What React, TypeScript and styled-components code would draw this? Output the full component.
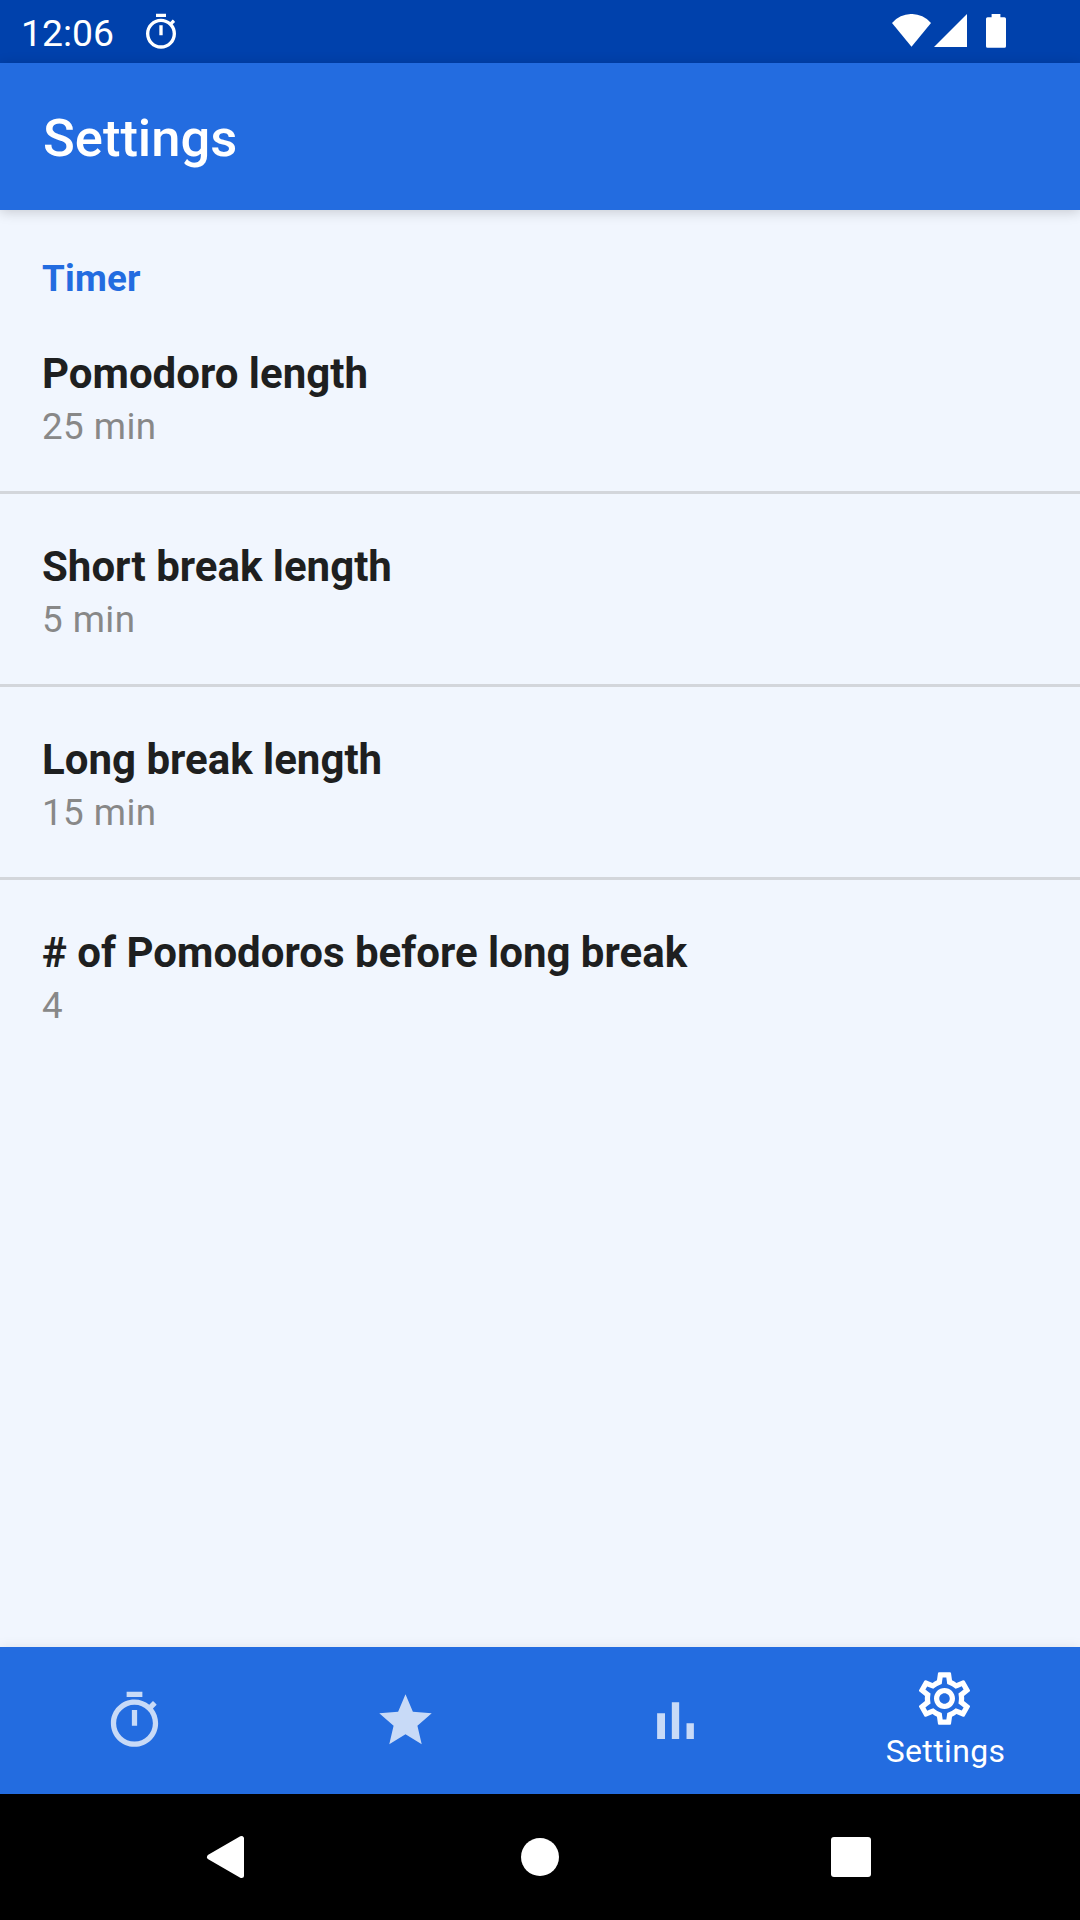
import React from 'react';
import styled, { createGlobalStyle } from 'styled-components';

const Global = createGlobalStyle`
  body { margin: 0; font-family: Roboto, "Noto Sans", sans-serif; }
  * { box-sizing: border-box; }
`;
const Screen = styled.div`
  width: 1080px; height: 1920px; display: flex; flex-direction: column;
  background: #f1f6fe; overflow: hidden;
`;
const StatusBar = styled.header`
  height: 63px; flex: none; background: #0041ac; color: #fff;
  display: flex; align-items: center; padding: 0 72px 0 21px;
`;
const Clock = styled.span`
  font-size: 37.3px; line-height: 44px; margin: 3px 28px 0 0; width: 92px; white-space: nowrap;
`;
const StatusIcons = styled.div`
  margin: 1px 0 0 auto; display: flex; align-items: center;
`;
const AppBar = styled.div`
  height: 147px; flex: none; background: #236ce0; color: #fff;
  display: flex; align-items: center; padding: 2px 43px 0;
  box-shadow: 0 2px 12px rgba(0, 0, 0, 0.18);
`;
const Title = styled.h1`
  margin: 0; font-size: 52.5px; line-height: 62px; font-weight: 500;
`;
const Content = styled.main`
  flex: 1; padding-top: 47px;
`;
const Section = styled.h2`
  margin: 0; padding-left: 42px; font-size: 36.75px; line-height: 44px; font-weight: 700;
  letter-spacing: 0.2px; color: #236ce0;
`;
const Preference = styled.div<{ $last?: boolean }>`
  height: 193px; padding: 48px 42px 0;
  border-bottom: ${(p) => (p.$last ? 'none' : '3px solid #d3d6db')};
`;
const Name = styled.div`
  font-size: 42px; line-height: 50px; font-weight: 700; color: #1e1f20;
`;
const Value = styled.div`
  margin-top: 6px; font-size: 36.75px; line-height: 44px; letter-spacing: 0.45px; color: #888;
`;
const Tabs = styled.nav`
  height: 147px; flex: none; background: #236ce0; display: grid; grid-template-columns: repeat(4, 1fr);
  box-shadow: 0 0 12px rgba(0, 0, 0, 0.08);
`;
const Tab = styled.div<{ $active?: boolean; $inset?: number }>`
  display: flex; flex-direction: column; align-items: center; justify-content: center;
  padding-right: ${(p) => p.$inset ?? 0}px;
  padding-bottom: ${(p) => (p.$active ? 4 : 0)}px;
  color: ${(p) => (p.$active ? '#fff' : '#c8daf7')};
`;
const TabLabel = styled.span`
  margin-top: 3px; padding-left: 2px; font-size: 31.9px; line-height: 37px; letter-spacing: 0.4px;
`;
const SystemNav = styled.footer`
  height: 126px; flex: none; background: #000; color: #fff; display: flex; justify-content: space-between;
  align-items: center; padding: 0 208px 0 206px;
`;
const Glyph = styled.svg`
  display: block; fill: currentColor; flex: none;
`;
const HomeGlyph = styled(Glyph)`
  margin-left: 6px;
`;

const TIMER = 'M15 1H9v2h6V1zm-4 13h2V8h-2v6zm8.03-6.61 1.42-1.42c-.43-.51-.9-.99-1.41-1.41l-1.42 1.42C16.07 4.74 14.12 4 12 4c-4.97 0-9 4.03-9 9s4.02 9 9 9 9-4.03 9-9c0-2.12-.74-4.07-1.97-5.61zM12 20c-3.87 0-7-3.13-7-7s3.13-7 7-7 7 3.13 7 7-3.13 7-7 7z';
const STAR = 'M12 17.27 18.18 21l-1.64-7.03L22 9.24l-7.19-.61L12 2 9.19 8.63 2 9.24l5.46 4.73L5.82 21z';
const BARS = 'M5 9.2h3V19H5zM10.6 5h2.8v14h-2.8zm5.6 8H19v6h-2.8z';
const GEAR = 'M19.43 12.98c.04-.32.07-.64.07-.98 0-.34-.03-.66-.07-.98l2.11-1.65c.19-.15.24-.42.12-.64l-2-3.46c-.09-.16-.26-.25-.44-.25-.06 0-.12.01-.17.03l-2.49 1c-.52-.4-1.08-.73-1.69-.98l-.38-2.65C14.46 2.18 14.25 2 14 2h-4c-.25 0-.46.18-.49.42l-.38 2.65c-.61.25-1.17.59-1.69.98l-2.49-1c-.06-.02-.12-.03-.18-.03-.17 0-.34.09-.43.25l-2 3.46c-.13.22-.07.49.12.64l2.11 1.65c-.04.32-.07.65-.07.98 0 .33.03.66.07.98l-2.11 1.65c-.19.15-.24.42-.12.64l2 3.46c.09.16.26.25.44.25.06 0 .12-.01.17-.03l2.49-1c.52.4 1.08.73 1.69.98l.38 2.65c.03.24.24.42.49.42h4c.25 0 .46-.18.49-.42l.38-2.65c.61-.25 1.17-.59 1.69-.98l2.49 1c.06.02.12.03.18.03.17 0 .34-.09.43-.25l2-3.46c.12-.22.07-.49-.12-.64l-2.11-1.65zm-1.98-1.71c.04.31.05.52.05.73 0 .21-.02.43-.05.73l-.14 1.13.89.7 1.08.84-.7 1.21-1.27-.51-1.04-.42-.9.68c-.43.32-.84.56-1.25.73l-1.06.43-.16 1.13-.2 1.35h-1.4l-.19-1.35-.16-1.13-1.06-.43c-.43-.18-.83-.41-1.23-.71l-.91-.7-1.06.43-1.27.51-.7-1.21 1.08-.84.89-.7-.14-1.13c-.03-.31-.05-.54-.05-.74s.02-.43.05-.73l.14-1.13-.89-.7-1.08-.84.7-1.21 1.27.51 1.04.42.9-.68c.43-.32.84-.56 1.25-.73l1.06-.43.16-1.13.2-1.35h1.39l.19 1.35.16 1.13 1.06.43c.43.18.83.41 1.23.71l.91.7 1.06-.43 1.27-.51.7 1.21-1.07.85-.89.7.14 1.13zM12 8c-2.21 0-4 1.79-4 4s1.79 4 4 4 4-1.79 4-4-1.79-4-4-4zm0 6c-1.1 0-2-.9-2-2s.9-2 2-2 2 .9 2 2-.9 2-2 2z';

const PREFERENCES = [
  ['Pomodoro length', '25 min'],
  ['Short break length', '5 min'],
  ['Long break length', '15 min'],
  ['# of Pomodoros before long break', '4'],
];

export default function App() {
  return (
    <Screen>
      <Global />
      <StatusBar>
        <Clock>12:06</Clock>
        <Glyph width="40" height="40" viewBox="0 0 24 24"><path d={TIMER} /></Glyph>
        <StatusIcons>
          <Glyph width="116" height="36" viewBox="0 0 116 36">
            <path d="M0 9A25.6 25.6 0 0 1 39 9L19.5 32.7z" />
            <path d="M75 0v33H42z" />
            <path d="M99.6 0h8.8v3.2h4q1.6 0 1.6 1.6v27.4q0 1.6-1.6 1.6H95.6q-1.6 0-1.6-1.6V4.8q0-1.6 1.6-1.6h4z" />
          </Glyph>
        </StatusIcons>
      </StatusBar>
      <AppBar><Title>Settings</Title></AppBar>
      <Content>
        <Section>Timer</Section>
        {PREFERENCES.map(([name, value], i) => (
          <Preference key={name} $last={i === PREFERENCES.length - 1}>
            <Name>{name}</Name>
            <Value>{value}</Value>
          </Preference>
        ))}
      </Content>
      <Tabs>
        {[TIMER, STAR, BARS].map((d, i) => (
          <Tab key={d} $inset={i === 0 ? 1 : 0}>
            <Glyph width="63" height="63" viewBox="0 0 24 24"><path d={d} /></Glyph>
          </Tab>
        ))}
        <Tab $active $inset={1}>
          <Glyph width="63" height="63" viewBox="0 0 24 24"><path d={GEAR} /></Glyph>
          <TabLabel>Settings</TabLabel>
        </Tab>
      </Tabs>
      <SystemNav>
        <Glyph width="38" height="44" viewBox="0 0 38 44">
          <path d="M35.5 3.5v37L3.5 22z" stroke="currentColor" strokeWidth="5" strokeLinejoin="round" />
        </Glyph>
        <HomeGlyph width="40" height="40" viewBox="0 0 40 40"><circle cx="20" cy="20" r="19" /></HomeGlyph>
        <Glyph width="42" height="42" viewBox="0 0 42 42"><rect x="1" y="1" width="40" height="40" rx="3" /></Glyph>
      </SystemNav>
    </Screen>
  );
}
